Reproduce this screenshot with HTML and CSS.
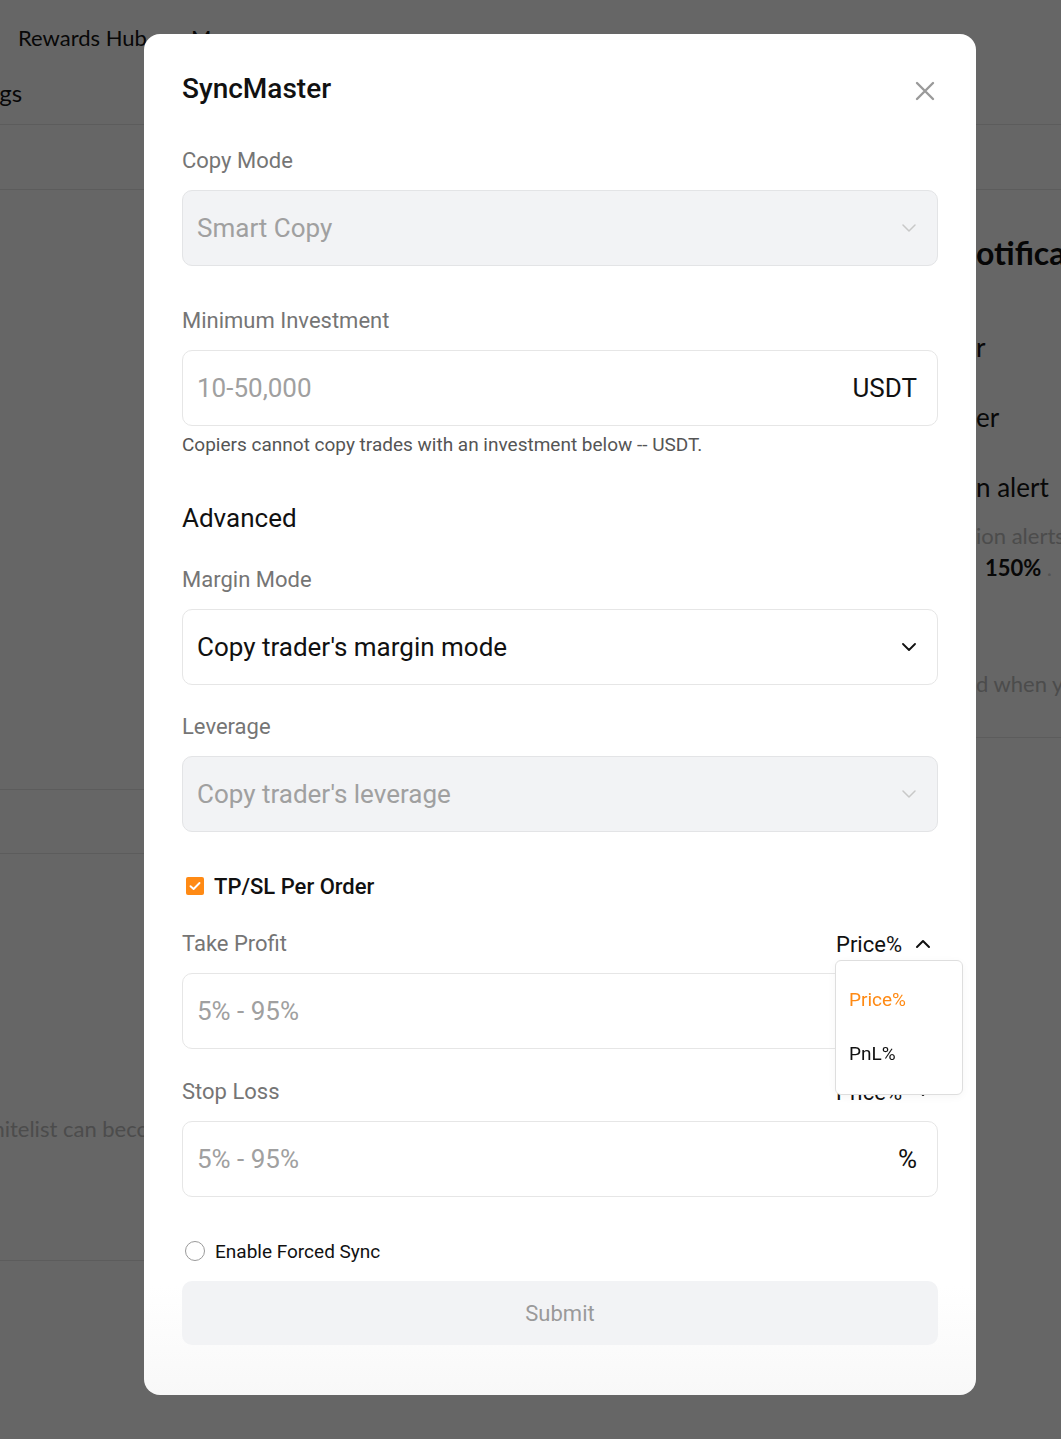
FILE: index.html
```html
<!DOCTYPE html>
<html lang="en">
<head>
<meta charset="utf-8">
<title>SyncMaster</title>
<link rel="stylesheet" href="styles.css">
</head>
<body>
<div class="page">
  <div class="nav">
    <span class="nav-item">Rewards Hub</span>
    <span class="nav-item">More ⌄</span>
  </div>
  <div class="subnav"><span class="subnav-text">Settings</span></div>
  <div class="tabs-row"></div>
  <div class="page-body">
    <div class="col-left">
      <div class="blk blk-a"></div>
      <div class="blk blk-b"></div>
      <div class="blk blk-c"><span class="grey-text">Only users on the whitelist can become copiers</span></div>
    </div>
    <div class="col-mid"></div>
    <div class="col-right">
      <div class="r-title">otifications</div>
      <div class="r-item r1">r</div>
      <div class="r-item r2">er</div>
      <div class="r-item r3">n alert</div>
      <div class="r-grey r4">ion alerts</div>
      <div class="r-bold r5">150% <span class="dot">.</span></div>
      <div class="r-grey r6">d when y</div>
    </div>
  </div>
</div>

<div class="overlay">
  <div class="modal">
    <div class="modal-head">
      <h1 class="modal-title">SyncMaster</h1>
      <svg class="close-icon" width="22" height="22" viewBox="0 0 22 22"><path d="M3 3L19 19M19 3L3 19" stroke="#9a9a9a" stroke-width="2.4" stroke-linecap="round"/></svg>
    </div>

    <div class="label first-label">Copy Mode</div>
    <div class="control disabled">
      <span class="ctrl-text placeholder">Smart Copy</span>
      <svg class="chev" width="14" height="8" viewBox="0 0 14 8"><path d="M1 1L7 7L13 1" fill="none" stroke="#c8c8c8" stroke-width="1.5" stroke-linecap="round" stroke-linejoin="round"/></svg>
    </div>

    <div class="label gap40">Minimum Investment</div>
    <div class="control">
      <span class="ctrl-text placeholder">10-50,000</span>
      <span class="suffix">USDT</span>
    </div>
    <div class="hint">Copiers cannot copy trades with an investment below -- USDT.</div>

    <div class="section-title">Advanced</div>

    <div class="label gap30">Margin Mode</div>
    <div class="control">
      <span class="ctrl-text">Copy trader's margin mode</span>
      <svg class="chev" width="14" height="8" viewBox="0 0 14 8"><path d="M1 1L7 7L13 1" fill="none" stroke="#111" stroke-width="1.8" stroke-linecap="round" stroke-linejoin="round"/></svg>
    </div>

    <div class="label gap27">Leverage</div>
    <div class="control disabled">
      <span class="ctrl-text placeholder">Copy trader's leverage</span>
      <svg class="chev" width="14" height="8" viewBox="0 0 14 8"><path d="M1 1L7 7L13 1" fill="none" stroke="#c8c8c8" stroke-width="1.5" stroke-linecap="round" stroke-linejoin="round"/></svg>
    </div>

    <div class="check-row">
      <span class="checkbox"><svg width="18" height="18" viewBox="0 0 18 18"><path d="M4.5 9.2L7.6 12L13.5 6" fill="none" stroke="#fff" stroke-width="1.9" stroke-linecap="round" stroke-linejoin="round"/></svg></span>
      <span class="check-label">TP/SL Per Order</span>
    </div>

    <div class="label-row tp-row">
      <span class="label-inline">Take Profit</span>
      <span class="toggle">
        <span>Price%</span>
        <svg width="16" height="10" viewBox="0 0 16 10"><path d="M2 8L8 2L14 8" fill="none" stroke="#111" stroke-width="2" stroke-linecap="round" stroke-linejoin="round"/></svg>
        <span class="popover">
          <span class="pop-item active">Price%</span>
          <span class="pop-item">PnL%</span>
        </span>
      </span>
    </div>
    <div class="control">
      <span class="ctrl-text placeholder">5% - 95%</span>
      <span class="suffix hidden-under">%</span>
    </div>

    <div class="label-row sl-row">
      <span class="label-inline">Stop Loss</span>
      <span class="toggle">
        <span>Price%</span>
        <svg width="16" height="10" viewBox="0 0 16 10"><path d="M2 2L8 8L14 2" fill="none" stroke="#111" stroke-width="2" stroke-linecap="round" stroke-linejoin="round"/></svg>
      </span>
    </div>
    <div class="control">
      <span class="ctrl-text placeholder">5% - 95%</span>
      <span class="suffix">%</span>
    </div>

    <div class="radio-row">
      <span class="radio"></span>
      <span class="radio-label">Enable Forced Sync</span>
    </div>

    <button class="submit" type="button">Submit</button>
  </div>
</div>
</body>
</html>
```

FILE: styles.css
```css
html, body {
  margin: 0;
  padding: 0;
}
body {
  width: 1061px;
  height: 1439px;
  overflow: hidden;
  background: #fff;
  font-family: Roboto, "Noto Sans", "Liberation Sans", sans-serif;
  color: #121212;
}

/* ---------- background page ---------- */
.page {
  display: flex;
  flex-direction: column;
  height: 1439px;
  white-space: nowrap;
  font-family: Lato, "Open Sans", sans-serif;
}
.nav {
  height: 74px;
  display: flex;
  align-items: center;
  gap: 44px;
  padding-left: 18px;
  font-size: 22px;
  color: #141414;
}
.subnav {
  height: 51px;
  box-sizing: border-box;
  border-bottom: 1px solid #e6e6e6;
  display: flex;
  align-items: flex-start;
  font-size: 24px;
  color: #141414;
}
.subnav-text {
  margin-left: -62px;
  margin-top: 3px;
  line-height: 32px;
}
.tabs-row {
  height: 65px;
  box-sizing: border-box;
  border-bottom: 1px solid #e6e6e6;
}
.page-body {
  display: grid;
  grid-template-columns: 144px 832px 85px;
  flex: 1;
}
.col-left {
  display: flex;
  flex-direction: column;
}
.blk {
  box-sizing: border-box;
  border-bottom: 1px solid #e6e6e6;
}
.blk-a { height: 600px; }
.blk-b { height: 64px; }
.blk-c {
  height: 407px;
  padding-top: 261px;
}
.grey-text {
  display: block;
  margin-left: -200px;
  font-size: 22px;
  line-height: 28px;
  color: #bdbdbd;
}
.col-right {
  display: flex;
  flex-direction: column;
  height: 548px;
  box-sizing: border-box;
  border-bottom: 1px solid #e6e6e6;
  overflow: hidden;
}
.r-title {
  margin-top: 43px;
  font-size: 32px;
  line-height: 40px;
  font-weight: 700;
  color: #111;
}
.r-item {
  font-size: 26px;
  line-height: 34px;
  color: #141414;
}
.r1 { margin-top: 57px; }
.r2 { margin-top: 36px; }
.r3 { margin-top: 36px; }
.r-grey {
  font-size: 22px;
  line-height: 28px;
  color: #bdbdbd;
}
.r4 { margin-top: 18px; }
.r-bold {
  font-size: 22px;
  line-height: 28px;
  font-weight: 700;
  color: #141414;
  padding-left: 9px;
  margin-top: 4px;
}
.dot { color: #cfcfcf; font-weight: 400; }
.r6 { margin-top: 88px; }

/* ---------- overlay + modal ---------- */
.overlay {
  position: fixed;
  inset: 0;
  background: rgba(0, 0, 0, 0.6);
  display: flex;
  align-items: flex-start;
  padding: 34px 0 0 144px;
}
.modal {
  width: 832px;
  box-sizing: border-box;
  padding: 37px 38px 50px;
  border-radius: 16px;
  background: linear-gradient(#fff 92%, #f8f8f8);
  display: flex;
  flex-direction: column;
}
.modal-head {
  height: 36px;
  display: flex;
  align-items: center;
  justify-content: space-between;
}
.modal-title {
  margin: 0;
  font-size: 28px;
  font-weight: 500;
  line-height: 36px;
  color: #111;
}
.close-icon {
  margin-right: 2px;
  margin-top: 4px;
}
.label {
  font-size: 22px;
  line-height: 30px;
  color: #757575;
  margin-bottom: 14px;
}
.first-label { margin-top: 39px; }
.gap40 { margin-top: 40px; }
.gap30 { margin-top: 30px; }
.gap27 { margin-top: 27px; }

.control {
  height: 76px;
  box-sizing: border-box;
  border: 1px solid #e6e6e6;
  border-radius: 10px;
  display: flex;
  align-items: center;
  justify-content: space-between;
  padding: 0 20px 0 14px;
  font-size: 26px;
  color: #111;
  background: #fff;
}
.control.disabled {
  background: #f2f3f5;
  border-color: #e3e4e6;
}
.ctrl-text.placeholder { color: #a0a0a0; }
.chev { margin-right: 1px; }
.suffix { color: #111; }
.hidden-under { visibility: hidden; }

.hint {
  margin-top: 7px;
  font-size: 19px;
  line-height: 24px;
  color: #555;
}
.section-title {
  margin-top: 44px;
  font-size: 26px;
  line-height: 34px;
  color: #111;
}

.check-row {
  margin-top: 40px;
  height: 28px;
  display: flex;
  align-items: center;
  gap: 10px;
  padding-left: 4px;
}
.checkbox {
  width: 18px;
  height: 18px;
  border-radius: 2px;
  background: #ff8a14;
  display: flex;
}
.check-label {
  font-size: 22px;
  font-weight: 500;
  color: #111;
}

.label-row {
  height: 30px;
  display: flex;
  align-items: center;
  justify-content: space-between;
  margin-bottom: 14px;
}
.tp-row { margin-top: 29px; }
.sl-row { margin-top: 28px; }
.label-inline {
  font-size: 22px;
  line-height: 30px;
  color: #757575;
}
.toggle {
  position: relative;
  display: flex;
  align-items: center;
  gap: 13px;
  font-size: 22px;
  color: #111;
  margin-right: 7px;
}
.popover {
  position: absolute;
  left: -1px;
  top: 28px;
  width: 128px;
  height: 135px;
  box-sizing: border-box;
  padding: 12px 0 0 13px;
  background: #fff;
  border: 1px solid #dedede;
  border-radius: 6px;
  box-shadow: 0 2px 8px rgba(0, 0, 0, 0.04);
  display: flex;
  flex-direction: column;
  z-index: 2;
}
.pop-item {
  height: 54px;
  line-height: 54px;
  font-size: 19px;
  color: #111;
}
.pop-item.active { color: #ff8a14; }

.radio-row {
  margin-top: 40px;
  height: 28px;
  display: flex;
  align-items: center;
  gap: 10px;
  padding-left: 3px;
}
.radio {
  width: 20px;
  height: 20px;
  box-sizing: border-box;
  border: 1.5px solid #9a9a9a;
  border-radius: 50%;
}
.radio-label {
  font-size: 19px;
  color: #111;
}
.submit {
  margin-top: 16px;
  height: 64px;
  border: none;
  border-radius: 10px;
  background: #f2f3f5;
  color: #9a9a9a;
  font-family: inherit;
  font-size: 22px;
}
```
